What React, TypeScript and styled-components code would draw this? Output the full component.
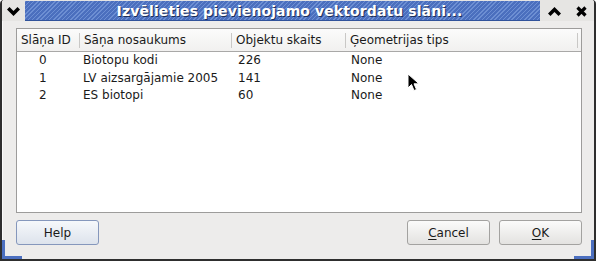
import styled, { createGlobalStyle } from "styled-components";

const Global = createGlobalStyle`
  html, body { margin:0; padding:0; background:#ffffff; }
  body { font-family:"DejaVu Sans", "Liberation Sans", sans-serif; }
`

const Window = styled.div`
  position:relative;
  width:596px;
  height:261px;
  box-sizing:border-box;
  background:#edeceb;
  border:2px solid #2e2e2e;
  border-top:0;
  border-radius:4px 4px 0 0;
  display:flex;
  flex-direction:column;
  overflow:hidden;
`

const TitleBar = styled.div`
  display:flex;
  align-items:stretch;
  height:20px;
  padding-top:1px;
  background:#e6e5e3;
`

const FrameBtn = styled.div<{w:number}>`
  width:${p => p.w}px;
  display:flex;
  align-items:center;
  justify-content:center;
  background:#e6e5e3;
`

const TitleStrip = styled.div`
  flex:1;
  display:flex;
  align-items:center;
  justify-content:center;
  padding-left:14px;
  background: repeating-linear-gradient(135deg, #6d8fd3 0 1px, #4b6fbe 1px 3px);
  border-bottom:1px solid #30529a;
  color:white;
  font-family:"DejaVu Sans", sans-serif;
  font-weight:bold;
  font-size:14px;
  letter-spacing:0.1px;
  text-shadow:1px 1px 0 #1e2f5a;
  white-space:nowrap;
`

const Body = styled.div`
  flex:1;
  display:flex;
  flex-direction:column;
  padding:7px 12px 0 13px;
  border-left:1px solid #fafafa;
`

const Panel = styled.div`
  height:183px;
  background:white;
  border:1px solid #9d9c9b;
  display:flex;
  flex-direction:column;
  font-size:12px;
  color:#1a1a1a;
`

const Header = styled.div`
  display:grid;
  grid-template-columns:63px 152px 114px 1fr;
  height:22px;
  align-items:center;
  background:linear-gradient(#fbfbfb, #f1f0ef);
  border-bottom:1px solid #a9a8a7;
`

const HeadCell = styled.div<{last?:boolean}>`
  height:15px;
  line-height:15px;
  padding-left:${p => p.last ? 4 : 4}px;
  border-right:1px solid #c9c8c6;
  margin-right:${p => p.last ? 3 : 0}px;
`

const Row = styled.div`
  display:grid;
  grid-template-columns:63px 152px 114px 1fr;
  height:17.5px;
  line-height:17.5px;
`

const Cell = styled.div<{pad:number}>`
  padding-left:${p => p.pad}px;
  white-space:nowrap;
`

const Buttons = styled.div`
  display:flex;
  align-items:center;
  margin-top:7px;
  gap:9px;
`

const Button = styled.button<{focus?:boolean}>`
  width:83px;
  height:25px;
  box-sizing:border-box;
  border:1px solid ${p => p.focus ? "#8597bc" : "#a3a2a0"};
  border-radius:3px;
  background:${p => p.focus
    ? "linear-gradient(#f6f8fb, #dde3ec)"
    : "linear-gradient(#fbfbfa, #e3e2e0)"};
  font-family:"DejaVu Sans", sans-serif;
  font-size:12px;
  color:#1a1a1a;
  padding:0;
  u { text-decoration:underline; text-underline-offset:2px; }
`

const Spacer = styled.div`
  flex:1;
`

const Corner = styled.div<{side:"left"|"right"}>`
  position:absolute;
  bottom:0;
  ${p => p.side}:0;
  width:20px;
  height:19px;
  border-bottom:3px solid #4c6fbf;
  ${p => p.side === "left" ? "border-left" : "border-right"}:3px solid #4c6fbf;
  box-sizing:border-box;
`

const Pointer = styled.svg`
  position:absolute;
  left:405px;
  top:73px;
`

const rows = [
  ["0", "Biotopu kodi", "226", "None"],
  ["1", "LV aizsargājamie 2005", "141", "None"],
  ["2", "ES biotopi", "60", "None"],
]

const App = () => {
  return (<>
    <Global />
    <Window>
      <TitleBar>
        <FrameBtn w={23}>
          <svg width="13" height="9" viewBox="0 0 13 9">
            <path d="M0 2.5 L2.5 0 L6.5 4 L10.5 0 L13 2.5 L6.5 9 Z" fill="#000" />
          </svg>
        </FrameBtn>
        <TitleStrip>Izvēlieties pievienojamo vektordatu slāni...</TitleStrip>
        <FrameBtn w={28}>
          <svg width="13" height="9" viewBox="0 0 13 9">
            <path d="M0 6.5 L2.5 9 L6.5 5 L10.5 9 L13 6.5 L6.5 0 Z" fill="#000" />
          </svg>
        </FrameBtn>
        <FrameBtn w={26}>
          <svg width="11" height="11" viewBox="0 0 11 11">
            <path d="M1.5 1.5 L9.5 9.5 M9.5 1.5 L1.5 9.5" stroke="#000" strokeWidth="3.2" />
          </svg>
        </FrameBtn>
      </TitleBar>
      <Body>
        <Panel>
          <Header>
            <HeadCell>Slāņa ID</HeadCell>
            <HeadCell>Sāņa nosaukums</HeadCell>
            <HeadCell>Objektu skaits</HeadCell>
            <HeadCell last>Ģeometrijas tips</HeadCell>
          </Header>
          {rows.map(r => (
            <Row key={r[0]}>
              <Cell pad={22}>{r[0]}</Cell>
              <Cell pad={3}>{r[1]}</Cell>
              <Cell pad={6}>{r[2]}</Cell>
              <Cell pad={5}>{r[3]}</Cell>
            </Row>
          ))}
        </Panel>
        <Buttons>
          <Button focus>Help</Button>
          <Spacer />
          <Button><u>C</u>ancel</Button>
          <Button><u>O</u>K</Button>
        </Buttons>
      </Body>
      <Corner side="left" />
      <Corner side="right" />
      <Pointer width="14" height="20" viewBox="0 0 14 20">
        <path d="M1 1 L1 15 L4.5 11.5 L7 17.5 L9.5 16.5 L7 10.8 L12 10.8 Z" fill="#000" stroke="#fff" strokeWidth="1" />
      </Pointer>
    </Window>
  </>)
}

export default App;
